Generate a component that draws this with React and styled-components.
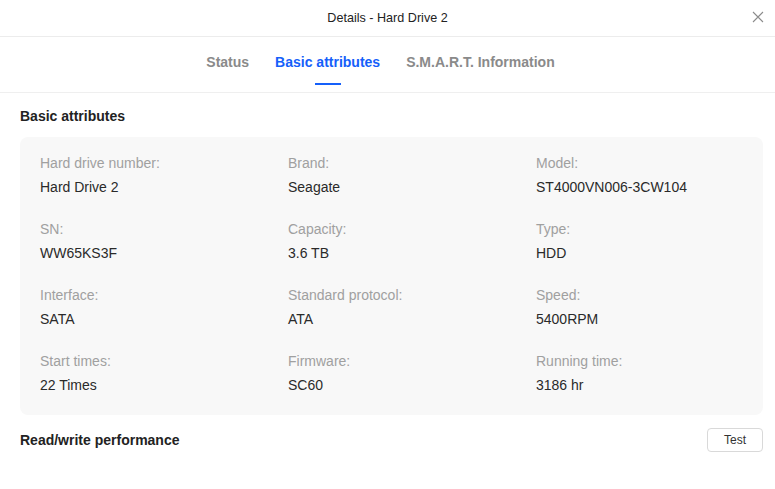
import React, { useState } from "react";
import styled, { createGlobalStyle } from "styled-components";

const GlobalStyle = createGlobalStyle`
  html, body {
    margin: 0;
    padding: 0;
    background: #fff;
    font-family: "Liberation Sans", Arial, sans-serif;
  }
`;

const Dialog = styled.div`
  width: 775px;
  height: 489px;
  background: #fff;
  display: flex;
  flex-direction: column;
  overflow: hidden;
`;

const Header = styled.div`
  height: 36px;
  border-bottom: 1px solid #ececec;
  display: flex;
  align-items: center;
  justify-content: center;
  position: relative;
  flex-shrink: 0;
  font-size: 12.6px;
  color: #222;
`;

const CloseBtn = styled.button`
  position: absolute;
  right: 10px;
  top: 10px;
  width: 14px;
  height: 14px;
  padding: 0;
  border: none;
  background: none;
  cursor: pointer;
  display: flex;
  align-items: center;
  justify-content: center;
`;

const Tabs = styled.div`
  height: 55px;
  border-bottom: 1px solid #efefef;
  display: flex;
  justify-content: center;
  gap: 26px;
  padding-right: 14px;
  flex-shrink: 0;
`;

const Tab = styled.div`
  position: relative;
  font-size: 14px;
  font-weight: 700;
  line-height: 16px;
  padding-top: 17px;
  color: ${props => (props.active ? "#1560fa" : "#8a8a8a")};
  cursor: pointer;

  &::after {
    content: "";
    display: ${props => (props.active ? "block" : "none")};
    position: absolute;
    left: 50%;
    bottom: 7px;
    width: 26px;
    height: 2px;
    margin-left: -13px;
    background: #1560fa;
  }
`;

const Body = styled.div`
  padding: 0 12px 0 20px;
`;

const SectionTitle = styled.div`
  display: flex;
  align-items: center;
  justify-content: space-between;
  height: ${props => props.height}px;
  padding-top: ${props => props.offset || 0}px;
  box-sizing: border-box;
  font-size: 14px;
  font-weight: 700;
  color: #222;
`;

const Panel = styled.div`
  background: #f8f8f8;
  border-radius: 8px;
  padding: 18px 20px 22px 20px;
  display: grid;
  grid-template-columns: repeat(3, 1fr);
  column-gap: 41px;
  row-gap: 26px;
`;

const Field = styled.div`
  display: flex;
  flex-direction: column;
  gap: 8px;
  font-size: 14px;
  line-height: 16px;
`;

const Label = styled.div`
  color: #a0a0a0;
`;

const Value = styled.div`
  color: #2a2a2a;
`;

const TestButton = styled.button`
  width: 56px;
  height: 24px;
  border: 1px solid #d9d9d9;
  border-radius: 4px;
  background: #fff;
  font-family: inherit;
  font-size: 12px;
  color: #333;
  cursor: pointer;
`;

const fields = [
  ["Hard drive number:", "Hard Drive 2"],
  ["Brand:", "Seagate"],
  ["Model:", "ST4000VN006-3CW104"],
  ["SN:", "WW65KS3F"],
  ["Capacity:", "3.6 TB"],
  ["Type:", "HDD"],
  ["Interface:", "SATA"],
  ["Standard protocol:", "ATA"],
  ["Speed:", "5400RPM"],
  ["Start times:", "22 Times"],
  ["Firmware:", "SC60"],
  ["Running time:", "3186 hr"],
];

const tabs = ["Status", "Basic attributes", "S.M.A.R.T. Information"];

export default function App() {
  const [tab, setTab] = useState("Basic attributes");

  return (
    <>
      <GlobalStyle />
      <Dialog>
        <Header>
          Details - Hard Drive 2
          <CloseBtn aria-label="close">
            <svg width="12" height="12" viewBox="0 0 12 12">
              <path d="M1 1L11 11M11 1L1 11" stroke="#8c8c8c" strokeWidth="1.1" />
            </svg>
          </CloseBtn>
        </Header>
        <Tabs>
          {tabs.map(t => (
            <Tab key={t} active={t === tab} onClick={() => setTab(t)}>
              {t}
            </Tab>
          ))}
        </Tabs>
        <Body>
          <SectionTitle height={44} offset={2}>Basic attributes</SectionTitle>
          <Panel>
            {fields.map(([label, value]) => (
              <Field key={label}>
                <Label>{label}</Label>
                <Value>{value}</Value>
              </Field>
            ))}
          </Panel>
          <SectionTitle height={50}>
            Read/write performance
            <TestButton>Test</TestButton>
          </SectionTitle>
        </Body>
      </Dialog>
    </>
  );
}
